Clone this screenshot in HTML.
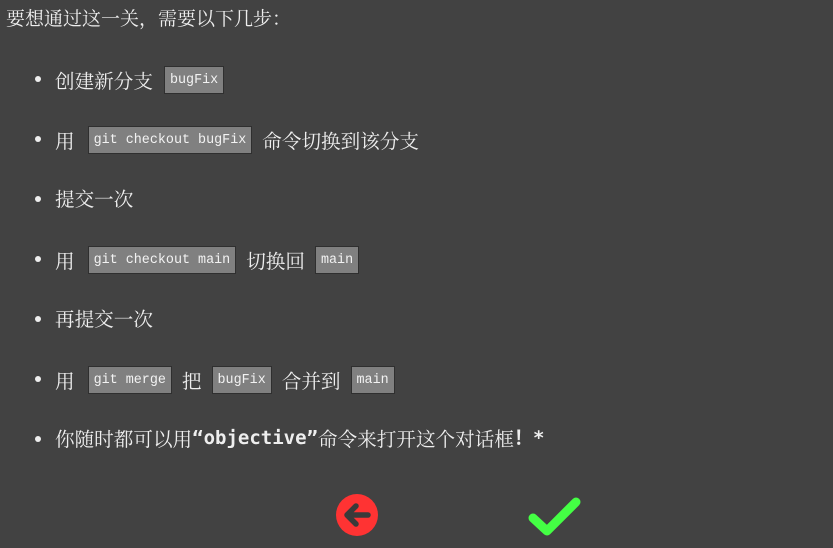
<!DOCTYPE html>
<html><head><meta charset="utf-8"><style>
html,body{margin:0;padding:0;background:#424242;width:833px;height:548px;overflow:hidden}
body{color:#eee;font-family:"Noto Serif CJK SC","Liberation Serif",serif;font-size:19.6px}
.l{position:absolute;left:55px;height:28px;line-height:28px;white-space:nowrap;display:flex;align-items:center}
.b{position:absolute;left:35px;width:6px;height:6px;border-radius:50%;background:#eee}
code{display:inline-block;box-sizing:border-box;height:28px;line-height:28px;padding:0 5px;background:#808080;border:1px solid #2f2f2f;font-family:"Liberation Mono",monospace;font-size:13.4px;color:#f2f2f2;margin:0 10px}
.m{font-family:"DejaVu Sans Mono",monospace;font-weight:bold;font-size:19px}
</style></head><body>
<div style="position:absolute;left:6px;top:5px;line-height:26px;font-size:19px">要想通过这一关，需要以下几步：</div>

<div class="b" style="top:76px"></div>
<div class="l" style="top:66px">创建新分支 <code style="margin-left:11px">bugFix</code></div>

<div class="b" style="top:136px"></div>
<div class="l" style="top:126px">用<code style="margin-left:13px">git checkout bugFix</code>命令切换到该分支</div>

<div class="b" style="top:196px"></div>
<div class="l" style="top:184px">提交一次</div>

<div class="b" style="top:256px"></div>
<div class="l" style="top:246px">用<code style="margin-left:13px">git checkout main</code>切换回<code>main</code></div>

<div class="b" style="top:316px"></div>
<div class="l" style="top:304px">再提交一次</div>

<div class="b" style="top:376px"></div>
<div class="l" style="top:366px">用<code style="margin-left:13px">git merge</code>把<code>bugFix</code>合并到<code>main</code></div>

<div class="b" style="top:436px"></div>
<div class="l" style="top:424px">你随时都可以用<span class="m">“objective”</span>命令来打开这个对话框<span class="m">！*</span></div>

<svg style="position:absolute;left:334px;top:492px" width="46" height="46" viewBox="0 0 46 46">
<circle cx="23" cy="23" r="21" fill="#f33"/>
<path d="M34 23H14M22 14l-9 9 9 9" stroke="#3a3a3a" stroke-width="5.5" fill="none" stroke-linecap="round" stroke-linejoin="round"/>
</svg>
<svg style="position:absolute;left:526px;top:496px" width="56" height="42" viewBox="0 0 56 42">
<path d="M7 22l14 13L50 6" stroke="#4f4" stroke-width="9" fill="none" stroke-linecap="round" stroke-linejoin="round"/>
</svg>
</body></html>
